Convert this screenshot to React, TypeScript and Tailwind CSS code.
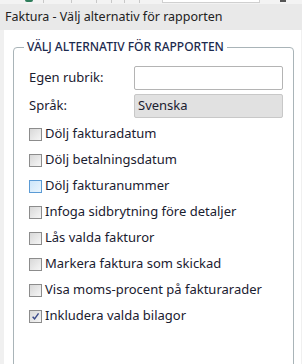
import React from "react";

type Opt = { label: string; checked?: boolean; focused?: boolean };

const options: Opt[] = [
  { label: "Dölj fakturadatum" },
  { label: "Dölj betalningsdatum" },
  { label: "Dölj fakturanummer", focused: true },
  { label: "Infoga sidbrytning före detaljer" },
  { label: "Lås valda fakturor" },
  { label: "Markera faktura som skickad" },
  { label: "Visa moms-procent på fakturarader" },
  { label: "Inkludera valda bilagor", checked: true },
];

function Checkbox({ checked, focused }: { checked?: boolean; focused?: boolean }) {
  return (
    <span
      className={
        "relative flex h-[13px] w-[13px] shrink-0 items-center justify-center border " +
        (focused
          ? "border-[#5b9bd5] bg-gradient-to-br from-[#cde6fa] to-[#eaf5fd]"
          : "border-[#8c8c8c] bg-gradient-to-br from-[#d8d8d8] to-[#f6f6f6]")
      }
    >
      {checked && (
        <svg viewBox="0 0 10 10" className="h-[9px] w-[9px]">
          <path d="M1.8 5.2 L4 7.6 L8.4 1.6" fill="none" stroke="#3a4a8a" strokeWidth="1.6" />
        </svg>
      )}
    </span>
  );
}

export default function App() {
  return (
    <div className="flex h-[364px] w-[302px] flex-col overflow-hidden bg-[#f0f0f0] font-['Noto_Sans',sans-serif] text-[13px] text-[#1a2030]">
      {/* cut-off toolbar above */}
      <div className="relative h-[4px] shrink-0 bg-[#f3f3f3]">
        <span className="absolute left-[25px] top-0 h-[2px] w-[8px] rounded-b bg-[#2e7d5b]" />
        <span className="absolute left-[43px] top-0 h-[3px] w-px bg-[#c8c8c8]" />
        <span className="absolute left-[71px] top-0 h-[3px] w-px bg-[#c8c8c8]" />
        <span className="absolute left-[96px] top-0 h-[3px] w-px bg-[#c8c8c8]" />
        <span className="absolute left-[111px] top-0 h-[3px] w-px bg-[#c8c8c8]" />
        <span className="absolute left-[124px] top-0 h-[3px] w-px bg-[#c8c8c8]" />
        <span className="absolute left-[139px] top-0 h-[3px] w-px bg-[#c8c8c8]" />
        <span className="absolute left-[162px] top-0 h-[3px] w-[98px] border-x border-b border-[#d0d0d0] bg-white" />
        <span className="absolute left-[280px] top-0 h-[2px] w-[6px] bg-[#555]" />
      </div>

      {/* dialog title */}
      <div className="flex h-[26px] shrink-0 items-center bg-[#e9e9e9] pl-[5px] text-[12.5px] text-[#222]">
        Faktura - Välj alternativ för rapporten
      </div>

      {/* body */}
      <div className="ml-[4px] mr-[1px] flex-1 bg-white pl-[9px] pr-[7px] pt-[9px]">
        <fieldset className="h-[340px] rounded-[4px] border border-[#a9b4b8] px-0">
          <legend className="ml-[10px] px-[3px] text-[12px] font-medium uppercase leading-[16px] text-[#1c2a4e]">
            Välj alternativ för rapporten
          </legend>

          <div className="mt-[10px] flex flex-col pl-[15px] pr-[10px]">
            <div className="flex h-[25px] items-center">
              <span className="w-[105px]">Egen rubrik:</span>
              <span className="h-[24px] flex-1 rounded-[2px] border border-[#b4b4b4] bg-white" />
            </div>
            <div className="mt-[4px] flex h-[24px] items-center">
              <span className="w-[105px]">Språk:</span>
              <span className="flex h-[24px] flex-1 items-center rounded-[2px] border border-[#c8c8c8] bg-[#e1e1e1] pl-[3px]">
                Svenska
              </span>
            </div>

            <div className="mt-[3px] flex flex-col">
              {options.map((o) => (
                <label key={o.label} className="flex h-[26px] items-center gap-[3px]">
                  <Checkbox checked={o.checked} focused={o.focused} />
                  <span>{o.label}</span>
                </label>
              ))}
            </div>
          </div>
        </fieldset>
      </div>
    </div>
  );
}
